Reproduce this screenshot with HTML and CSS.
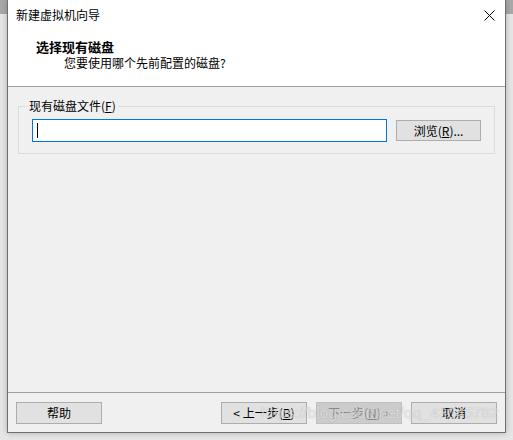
FILE: index.html
```html
<!DOCTYPE html>
<html lang="zh-CN">
<head>
    <meta charset="UTF-8">
    <title>新建虚拟机向导</title>
    <link rel="stylesheet" href="styles.css">
</head>
<body>
    <div class="window">
        <div class="titlebar">
            <span class="title">新建虚拟机向导</span>
            <svg class="close" width="11" height="11" viewBox="0 0 11 11">
                <path d="M0.5 0.5 L10.5 10.5 M10.5 0.5 L0.5 10.5" stroke="#000" stroke-width="1" fill="none"/>
            </svg>
        </div>

        <div class="header">
            <div class="heading">选择现有磁盘</div>
            <div class="subheading">您要使用哪个先前配置的磁盘?</div>
        </div>

        <div class="content">
            <fieldset class="group">
                <legend>现有磁盘文件(<u>F</u>)</legend>
                <div class="file-row">
                    <div class="textbox"><span class="caret"></span></div>
                    <button class="button">浏览(<u>R</u>)...</button>
                </div>
            </fieldset>
        </div>

        <div class="footer">
            <button class="button">帮助</button>
            <div class="nav">
                <button class="button">&lt; 上一步(<u>B</u>)</button>
                <button class="button disabled">下一步(<u>N</u>) &gt;</button>
                <button class="button">取消</button>
            </div>
        </div>

        <div class="watermark">https://blog.csdn.net/qq_43045782</div>
    </div>
</body>
</html>
```

FILE: styles.css
```css
body {
    margin: 0;
    height: 440px;
    overflow: hidden;
    background: linear-gradient(#a9a9a9 0, #a9a9a9 14px, #e6e6e6 14px);
    font-family: 'Noto Sans CJK SC', 'Microsoft YaHei', sans-serif;
    font-size: 12px;
    color: #000;
}
.window {
    position: relative;
    margin-left: 7px;
    width: 497px;
    height: 432px;
    border: 1px solid #6f6f6f;
    border-top: none;
    background: #f0f0f0;
    box-shadow: 0 0 6px rgba(0, 0, 0, 0.25);
    display: flex;
    flex-direction: column;
}
.titlebar {
    height: 30px;
    background: #fff;
    display: flex;
    align-items: center;
    justify-content: space-between;
    padding: 0 10px 0 8px;
}
.title {
    line-height: 16px;
}
.close {
    display: block;
}
.header {
    background: #fff;
    height: 57px;
    padding-top: 9px;
    box-sizing: border-box;
    border-bottom: 1px solid #a0a0a0;
}
.heading {
    font-size: 13px;
    font-weight: bold;
    line-height: 16px;
    padding-left: 28px;
}
.subheading {
    line-height: 16px;
    padding-left: 56px;
}
.content {
    flex: 1;
    padding: 11px 10px 0 10px;
}
.group {
    margin: 0;
    padding: 5px 13px 11px 13px;
    border: 1px solid #dcdcdc;
    min-width: 0;
}
.group legend {
    margin-left: -5px;
    padding: 0 2px;
    line-height: 16px;
}
.file-row {
    display: flex;
    align-items: center;
    gap: 9px;
}
.textbox {
    width: 350px;
    height: 21px;
    border: 1px solid #0078d7;
    background: #fff;
    display: flex;
    align-items: center;
    padding-left: 4px;
}
.caret {
    width: 1px;
    height: 15px;
    background: #000;
}
.button {
    width: 86px;
    height: 22px;
    padding: 0;
    border: 1px solid #adadad;
    background: #e1e1e1;
    font-family: inherit;
    font-size: 12px;
    color: #000;
    line-height: 18px;
}
.file-row .button {
    width: 85px;
    height: 21px;
}
.button.disabled {
    background: #cccccc;
    border-color: #bfbfbf;
    color: #8a8a8a;
}
.footer {
    border-top: 1px solid #a0a0a0;
    height: 40px;
    padding: 9px 8px 0 8px;
    box-sizing: border-box;
    display: flex;
    justify-content: space-between;
    align-items: flex-start;
}
.nav {
    display: flex;
    gap: 9px;
}
.watermark {
    position: absolute;
    left: 253px;
    top: 404px;
    font-family: 'Liberation Sans', Arial, sans-serif;
    font-size: 15.5px;
    color: rgba(255, 255, 255, 0.6);
    text-shadow: 0 0 1px rgba(0, 0, 0, 0.25);
    white-space: nowrap;
}
```
